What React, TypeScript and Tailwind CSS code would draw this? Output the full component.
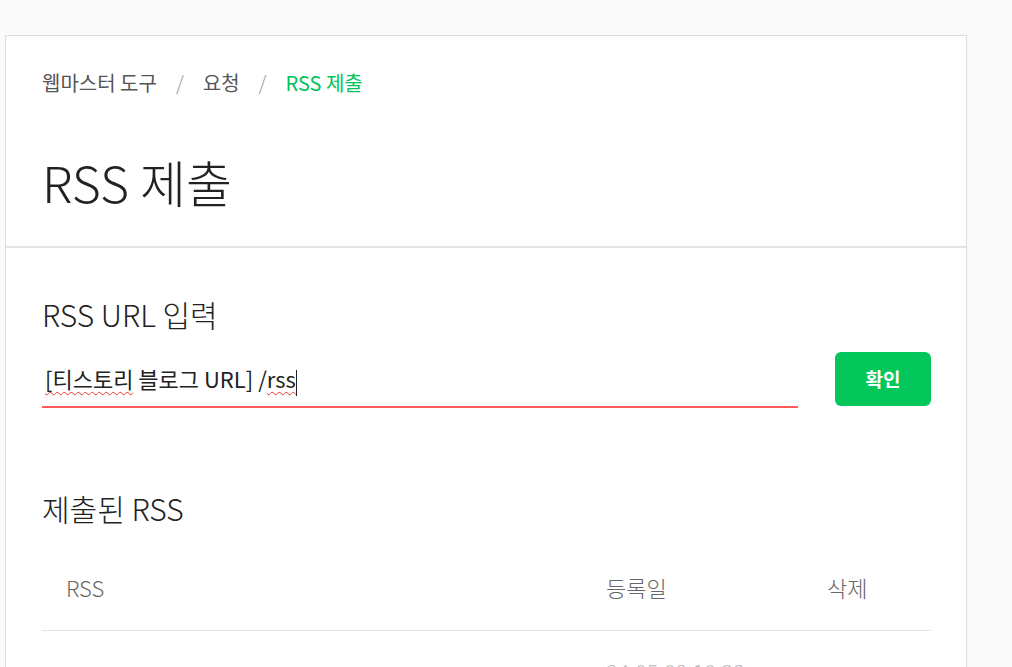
import React from "react"

const font = { fontFamily: '"Noto Sans CJK KR", "Noto Sans", sans-serif' }

function Breadcrumb() {
  return (
    <nav className="flex items-center text-[20px] leading-[26px] text-[#555]">
      <span>웹마스터 도구</span>
      <span className="mx-[19px] text-[#999] font-light">/</span>
      <span>요청</span>
      <span className="mx-[19px] text-[#999] font-light">/</span>
      <span className="text-[#00c35a]">RSS 제출</span>
    </nav>
  )
}

export default function App() {
  return (
    <div className="min-h-screen bg-[#fafafa] pl-[5px] pt-[35px]" style={font}>
      <div className="w-[962px] border border-[#dddddd] bg-white">
        <div className="px-[36px] pt-[34px] pb-[35px] border-b-2 border-[#e4e4e4]">
          <Breadcrumb />
          <h1 className="mt-[56px] text-[50px] leading-[59px] font-light text-[#222]">RSS 제출</h1>
        </div>

        <div className="pl-[36px] pr-[35px] pt-[46px]">
          <h2 className="text-[30px] leading-[40px] font-light text-[#222]">RSS URL 입력</h2>
          <div className="mt-[18px] flex items-start gap-[37px]">
            <div className="w-[756px] h-[56px] border-b-2 border-[#ff5a5a] flex items-center pl-[3px]">
              <span className="text-[22px] text-[#222]">
                <span className="underline decoration-wavy decoration-[#e53935] decoration-1 underline-offset-[3px]">[티스토리</span>{" "}
                블로그 URL] /
                <span className="underline decoration-wavy decoration-[#e53935] decoration-1 underline-offset-[3px]">rss</span>
                <span className="inline-block w-px h-[26px] bg-[#222] align-middle"></span>
              </span>
            </div>
            <button className="w-[96px] h-[54px] rounded-[6px] bg-[#03c75a] text-white text-[19px] font-bold">확인</button>
          </div>

          <h2 className="mt-[80px] text-[30px] leading-[40px] font-light text-[#222]">제출된 RSS</h2>

          <div className="mt-[17px]">
            <div className="grid grid-cols-[540px_221px_128px] h-[86px] items-center border-b border-[#e5e5e5] text-[22px] font-light text-[#666]">
              <div className="pl-[24px]">RSS</div>
              <div className="pl-[24px]">등록일</div>
              <div className="pl-[24px]">삭제</div>
            </div>
            <div className="grid grid-cols-[540px_221px_128px] h-[80px] items-center text-[22px] font-light text-[#bbb]">
              <div className="pl-[24px]"></div>
              <div className="pl-[24px]">24.05.09 10:33:</div>
              <div className="pl-[24px]"></div>
            </div>
          </div>
        </div>
      </div>
    </div>
  )
}
